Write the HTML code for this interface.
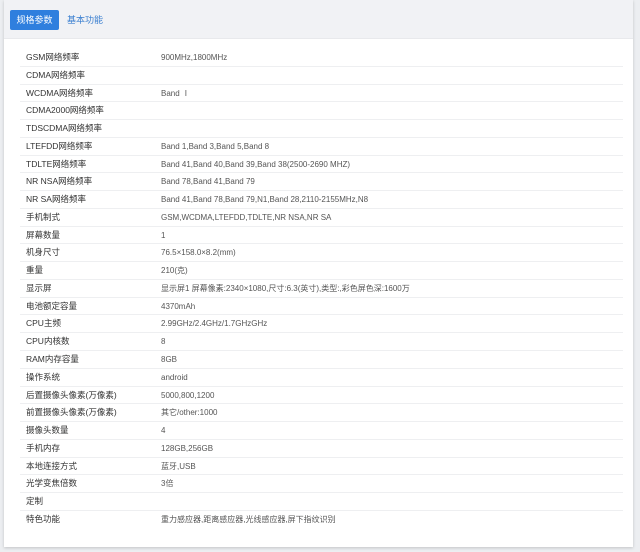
<!DOCTYPE html><html><head><meta charset="utf-8"><style>
body{margin:0;width:640px;height:552px;background:#eceef1;font-family:"Liberation Sans","Noto Sans CJK SC",sans-serif;overflow:hidden}
.card{position:absolute;left:4px;top:0;width:629px;height:547px;background:#fff;box-shadow:0 1px 3px rgba(0,0,0,.18)}
.hd{height:38px;background:#f1f2f5;border-bottom:1px solid #e8e9ec;position:relative}
.btn{position:absolute;left:6px;top:10px;width:49px;height:20px;background:#2f7fde;color:#fff;font-size:9px;line-height:20px;text-align:center;border-radius:2px}
.t2{position:absolute;left:63px;top:10px;line-height:20px;font-size:9px;color:#3a7fd0}
.rows{position:absolute;left:16px;top:49px;width:603px}
.r{height:17.77px;box-sizing:border-box;border-bottom:1px solid #eeeff1;font-size:8.5px;color:#333;position:relative}
.r span{position:absolute;left:6px;top:0;line-height:17.5px}
.r b{font-weight:normal;position:absolute;left:141px;top:0;line-height:17.5px;color:#555;font-size:8px}
.r:last-child{border-bottom:none}
</style></head><body><div class="card"><div class="hd"><div class="btn">规格参数</div><div class="t2">基本功能</div></div>
<div class="rows">
<div class="r"><span>GSM网络频率</span><b>900MHz,1800MHz</b></div>
<div class="r"><span>CDMA网络频率</span><b></b></div>
<div class="r"><span>WCDMA网络频率</span><b>Band Ⅰ</b></div>
<div class="r"><span>CDMA2000网络频率</span><b></b></div>
<div class="r"><span>TDSCDMA网络频率</span><b></b></div>
<div class="r"><span>LTEFDD网络频率</span><b>Band 1,Band 3,Band 5,Band 8</b></div>
<div class="r"><span>TDLTE网络频率</span><b>Band 41,Band 40,Band 39,Band 38(2500-2690 MHZ)</b></div>
<div class="r"><span>NR NSA网络频率</span><b>Band 78,Band 41,Band 79</b></div>
<div class="r"><span>NR SA网络频率</span><b>Band 41,Band 78,Band 79,N1,Band 28,2110-2155MHz,N8</b></div>
<div class="r"><span>手机制式</span><b>GSM,WCDMA,LTEFDD,TDLTE,NR NSA,NR SA</b></div>
<div class="r"><span>屏幕数量</span><b>1</b></div>
<div class="r"><span>机身尺寸</span><b>76.5×158.0×8.2(mm)</b></div>
<div class="r"><span>重量</span><b>210(克)</b></div>
<div class="r"><span>显示屏</span><b>显示屏1 屏幕像素:2340×1080,尺寸:6.3(英寸),类型:,彩色屏色深:1600万</b></div>
<div class="r"><span>电池额定容量</span><b>4370mAh</b></div>
<div class="r"><span>CPU主频</span><b>2.99GHz/2.4GHz/1.7GHzGHz</b></div>
<div class="r"><span>CPU内核数</span><b>8</b></div>
<div class="r"><span>RAM内存容量</span><b>8GB</b></div>
<div class="r"><span>操作系统</span><b>android</b></div>
<div class="r"><span>后置摄像头像素(万像素)</span><b>5000,800,1200</b></div>
<div class="r"><span>前置摄像头像素(万像素)</span><b>其它/other:1000</b></div>
<div class="r"><span>摄像头数量</span><b>4</b></div>
<div class="r"><span>手机内存</span><b>128GB,256GB</b></div>
<div class="r"><span>本地连接方式</span><b>蓝牙,USB</b></div>
<div class="r"><span>光学变焦倍数</span><b>3倍</b></div>
<div class="r"><span>定制</span><b></b></div>
<div class="r"><span>特色功能</span><b>重力感应器,距离感应器,光线感应器,屏下指纹识别</b></div>
</div></div></body></html>
